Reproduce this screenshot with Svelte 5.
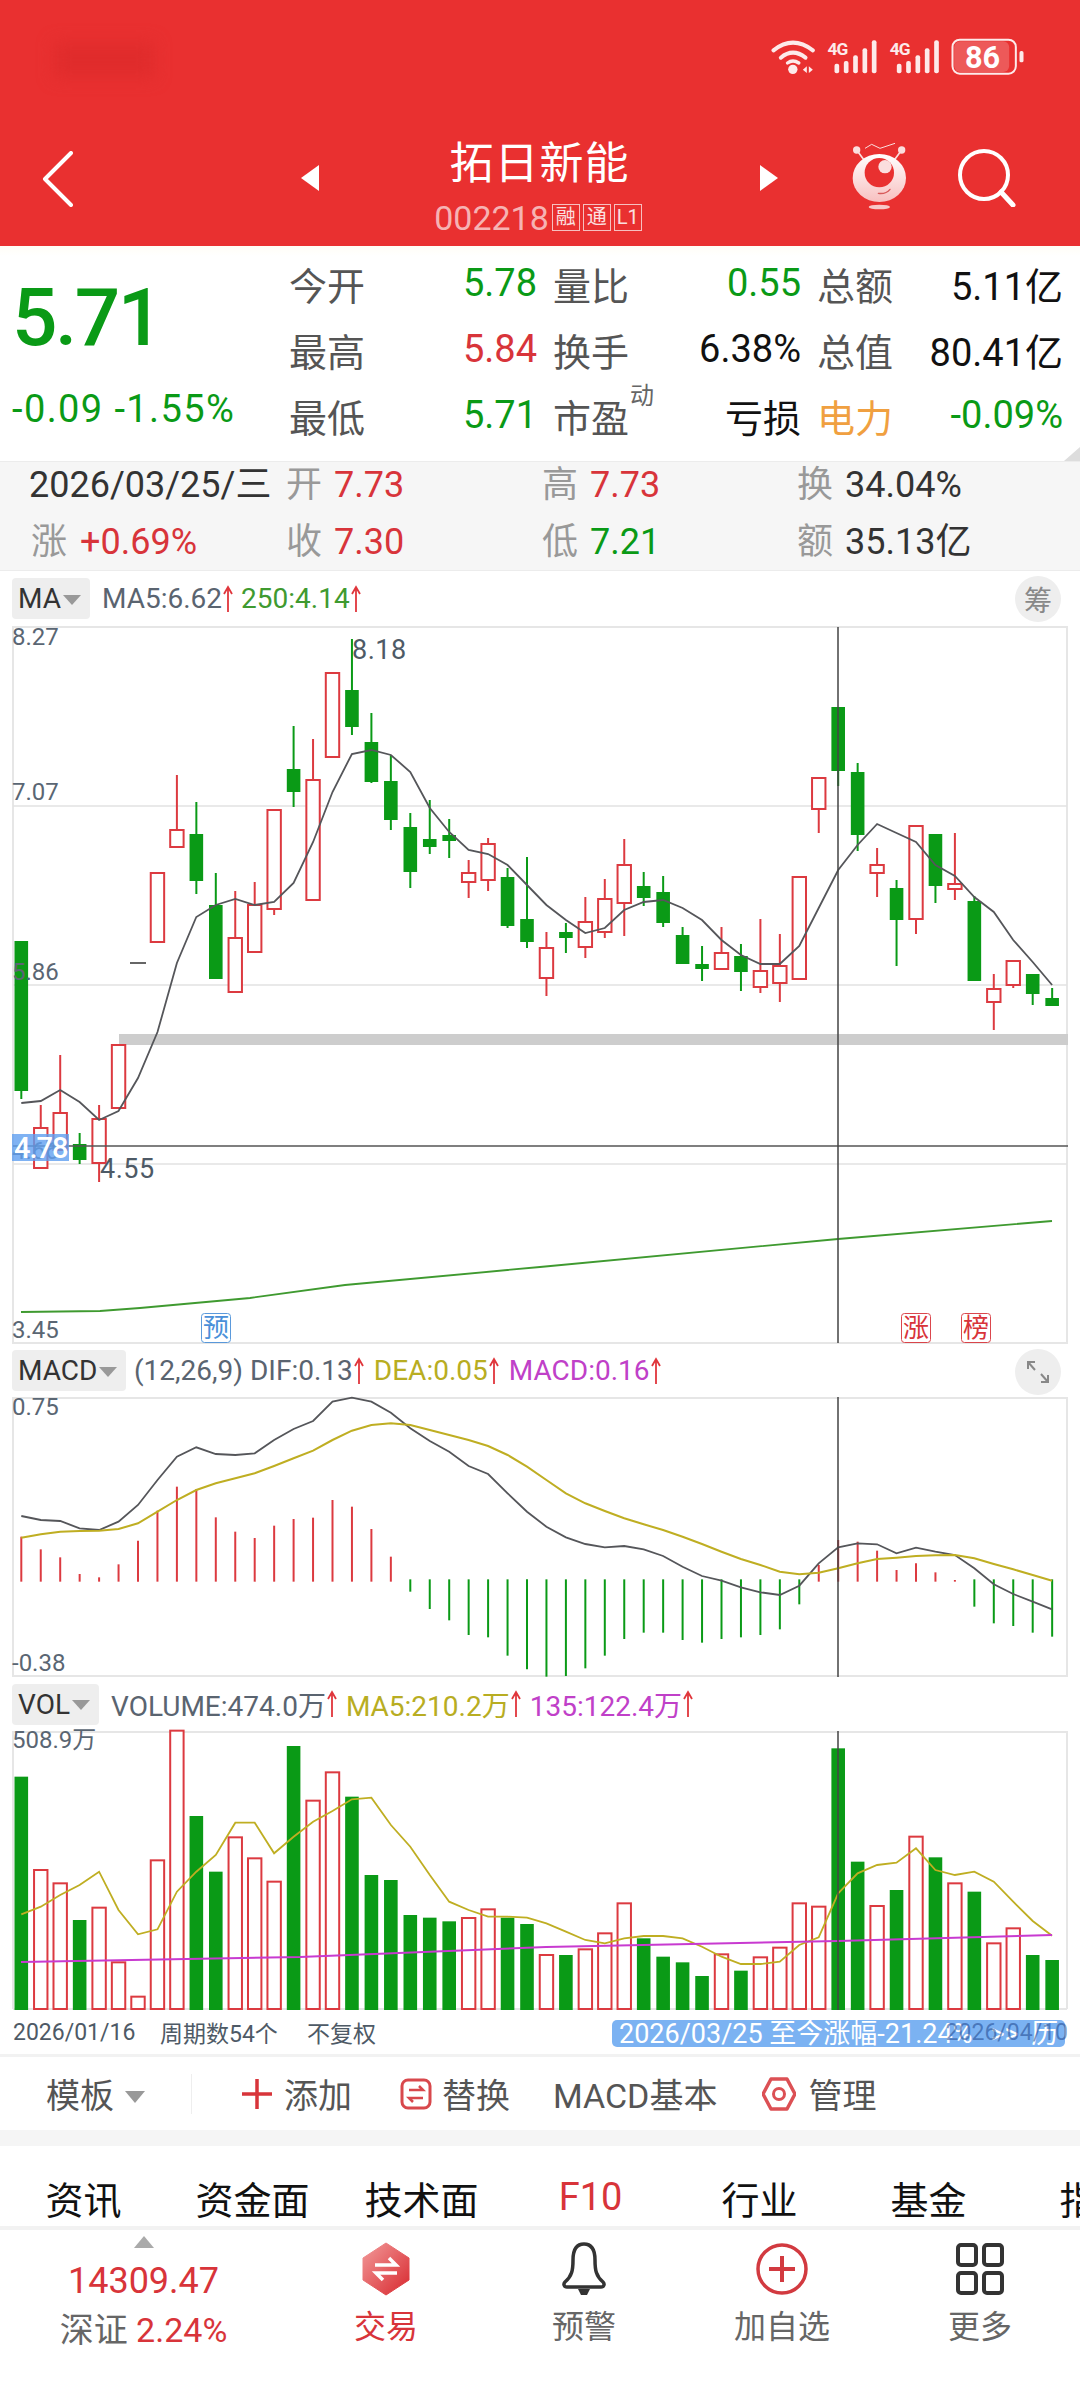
<script>
  const X = (i) => 21.3 + 19.45 * i
  const line = (ys, map = (y) => y) => ys.map((y, i) => `${X(i).toFixed(1)},${map(y).toFixed(1)}`).join(' ')

  // type, high, body top, body bottom, low (page y)
  const candles = [
    ['g', 941, 941, 1091, 1099], ['r', 1105, 1128, 1168, 1168], ['r', 1055, 1113, 1150, 1150], ['g', 1133, 1144, 1160, 1164],
    ['r', 1105, 1119, 1163, 1182], ['r', 1045, 1045, 1108, 1108], ['f', 963, 963, 963, 963], ['r', 873, 873, 942, 942],
    ['r', 775, 830, 847, 847], ['g', 802, 834, 881, 894], ['g', 873, 905, 979, 979], ['r', 891, 938, 992, 992],
    ['r', 882, 905, 952, 952], ['r', 810, 810, 909, 915], ['g', 726, 769, 792, 807], ['r', 739, 780, 900, 900],
    ['r', 673, 673, 757, 757], ['g', 639, 690, 727, 735], ['g', 713, 742, 782, 783], ['g', 755, 781, 820, 830],
    ['g', 813, 827, 872, 888], ['g', 800, 839, 847, 854], ['g', 819, 835, 841, 858], ['r', 860, 873, 882, 898],
    ['r', 838, 844, 880, 891], ['g', 868, 877, 926, 928], ['g', 857, 919, 942, 948], ['r', 932, 948, 978, 996],
    ['g', 923, 932, 938, 953], ['r', 897, 922, 947, 958], ['r', 879, 899, 932, 938], ['r', 839, 865, 903, 936],
    ['g', 872, 886, 898, 906], ['g', 876, 892, 923, 927], ['g', 927, 935, 964, 964], ['g', 946, 964, 969, 981],
    ['r', 927, 953, 969, 969], ['g', 944, 956, 972, 991], ['r', 919, 971, 987, 993], ['r', 934, 966, 983, 1002],
    ['r', 877, 877, 979, 979], ['r', 778, 778, 809, 833], ['g', 707, 707, 771, 786], ['g', 763, 772, 835, 851],
    ['r', 848, 865, 873, 897], ['g', 880, 888, 920, 966], ['r', 826, 826, 919, 934], ['g', 834, 834, 886, 903],
    ['r', 833, 884, 889, 900], ['g', 896, 901, 981, 981], ['r', 974, 989, 1002, 1030], ['r', 961, 961, 985, 988],
    ['g', 974, 974, 994, 1005], ['g', 988, 998, 1006, 1006]
  ]

  const ma5 = [
    1103, 1101, 1090, 1102, 1120, 1111, 1078, 1032, 963, 917, 905, 899, 905, 902, 883, 842, 792, 754,
    750, 755, 772, 808, 832, 850, 854, 865, 885, 905, 920, 933, 928, 910, 902, 900, 908, 920, 940, 955,
    964, 964, 946, 908, 870, 845, 824, 833, 842, 865, 876, 897, 912, 940, 962, 985
  ]
  const ma250 = '21,1312 100,1311 140,1308 250,1298 345,1285 540,1267 838,1239 1052,1221'

  const grids = [806, 985, 1164]
  const axis = [['8.27', 645], ['7.07', 800], ['5.86', 980], ['4.66', 1159], ['3.45', 1338]]
  const tags = [['预', 201, '#4a90d9'], ['涨', 901, '#d8343a'], ['榜', 961, '#d8343a']]

  // macd bars: far end of each bar in zoomed y, 1340 + z / 3
  const macdY = (z) => 1340 + z / 3
  const macdBars = [
    590, 628, 652, 702, 712, 673, 602, 512, 440, 447, 532, 575, 594, 557, 537, 533, 480, 500, 567, 650,
    755, 807, 841, 885, 892, 947, 988, 1010, 1008, 985, 947, 897, 878, 878, 900, 908, 897, 892, 885, 868, 793,
    675, 600, 605, 632, 690, 670, 697, 720, 800, 850, 858, 878, 890
  ]
  const macdUp = (i) => i < 20 || (i > 40 && i < 49)
  const dif = [
    528, 540, 543, 565, 570, 545, 495, 420, 350, 322, 342, 345, 340, 300, 267, 243, 185, 173, 185, 218, 265,
    303, 335, 378, 402, 460, 515, 560, 592, 612, 622, 618, 628, 648, 680, 708, 722, 742, 757, 765, 737, 670,
    622, 610, 613, 640, 623, 635, 645, 685, 733, 762, 785, 808
  ]
  const dea = [
    593, 583, 575, 573, 572, 567, 550, 515, 480, 450, 430, 415, 400, 378, 355, 332, 300, 272, 255, 250, 255,
    270, 285, 300, 318, 345, 380, 420, 460, 490, 513, 535, 553, 570, 590, 612, 635, 657, 675, 695, 703, 698,
    685, 670, 657, 653, 648, 646, 645, 655, 672, 688, 705, 722
  ]

  // volume: bar tops, 1680 + z / 3
  const volY = (z) => 1680 + z / 3
  const volTypes = 'grrgrrrrrggrrrgrrggggggrrggrgrrrggggrgrrrrggrgrgrgrrgg'
  const volBars = [
    290, 570, 610, 720, 683, 847, 950, 541, 152, 408, 575, 472, 535, 605, 198, 362, 277, 350, 585, 600, 705,
    713, 724, 714, 688, 713, 732, 825, 825, 808, 760, 670, 775, 830, 847, 888, 823, 872, 832, 803, 670, 680,
    205, 545, 678, 630, 470, 532, 610, 635, 790, 745, 825, 840
  ]
  const volMa5 = [
    703, 680, 645, 615, 575, 690, 763, 748, 635, 575, 525, 428, 428, 520, 470, 425, 393, 358, 353, 435, 500,
    585, 665, 690, 710, 710, 713, 730, 755, 780, 790, 775, 768, 768, 775, 800, 830, 852, 852, 845, 795, 772,
    640, 580, 555, 548, 505, 570, 585, 575, 605, 665, 723, 767
  ]
  const volMa135 = '21,1962 300,1957 546,1947 838,1941 1052,1935'

  const quote = [
    ['今开', '5.78', 'green', '量比', '0.55', 'green', '总额', '5.11亿', 'black'],
    ['最高', '5.84', 'red', '换手', '6.38%', 'black', '总值', '80.41亿', 'black']
  ]
  const tabs = ['资讯', '资金面', '技术面', 'F10', '行业', '基金', '指标']
</script>

{#snippet up()}
  <svg class="up" width="10" height="28" viewBox="0 0 10 28"><path d="M5 27V2M1 9l4-7 4 7" fill="none" stroke="#e0363c" stroke-width="1.8" /></svg>
{/snippet}

{#snippet caret()}
  <i class="caret"></i>
{/snippet}

<div class="page">
  <header class="top">
    <div class="status">
      <span class="time-blur"></span>
      <svg width="257" height="40" viewBox="60 50 770 120">
        <g fill="none" stroke="#fdeaea" stroke-width="12" stroke-linecap="round">
          <path d="M70 90Q128 44 188 90" />
          <path d="M92 112Q128 82 166 112" />
        </g>
        <path d="M112 128Q128 116 146 128" fill="none" stroke="#fdeaea" stroke-width="10" stroke-linecap="round" />
        <circle cx="128" cy="147" r="14" fill="#fdeaea" />
        <path d="M170 138v20l-12-10zM176 138v20l12-10z" fill="#fdeaea" />
        {#each [0, 187] as dx}
          <g fill="#fdeaea" transform="translate({dx} 0)">
            <text class="net" x="232" y="103">4G</text>
            <rect x="253" y="130" width="14" height="29" rx="6" />
            <rect x="281" y="122" width="14" height="37" rx="6" />
            <rect x="309" y="105" width="14" height="54" rx="6" />
            <rect x="337" y="84" width="14" height="75" rx="6" />
            <rect x="365" y="60" width="14" height="99" rx="6" />
          </g>
        {/each}
        <rect x="607" y="58" width="190" height="102" rx="22" fill="none" stroke="#fdeaea" stroke-width="6" />
        <rect x="612" y="63" width="165" height="92" rx="18" fill="#fff" opacity=".2" />
        <text class="batt" x="697" y="142" text-anchor="middle">86</text>
        <rect x="808" y="92" width="12" height="34" rx="5" fill="#fdeaea" />
      </svg>
    </div>
    <div class="titlebar">
      <svg class="back" width="31" height="56" viewBox="0 0 31 56"><path d="M29 2L3 28l26 26" fill="none" stroke="#fff" stroke-width="4" stroke-linecap="round" stroke-linejoin="round" /></svg>
      <i class="tri left"></i>
      <div class="name">
        <div class="title">拓日新能</div>
        <div class="code">002218<b>融</b><b>通</b><b>L1</b></div>
      </div>
      <i class="tri right"></i>
      <svg class="mascot" width="60" height="70" viewBox="300 370 180 210">
        <defs>
          <linearGradient id="masc" x1="0" y1="0" x2="0" y2="1"><stop offset="0" stop-color="#fff" /><stop offset="1" stop-color="#f8c0c0" /></linearGradient>
        </defs>
        <path d="M320 397l22 30M455 397l-22 30" stroke="#fbdede" stroke-width="5" />
        <circle cx="320" cy="397" r="11" fill="#fbdede" />
        <circle cx="455" cy="397" r="11" fill="#fbdede" />
        <path d="M345 392l20-12 25 12 45-15" fill="none" stroke="#fbdede" stroke-width="3" />
        <ellipse cx="388" cy="481" rx="80" ry="72" fill="url(#masc)" />
        <circle cx="388" cy="465" r="44" fill="#e93030" />
        <circle cx="405" cy="447" r="20" fill="#fbdede" />
        <path d="M385 527q23 3 35-12" fill="none" stroke="#d85a5a" stroke-width="4" stroke-linecap="round" />
        <ellipse cx="388" cy="568" rx="32" ry="7" fill="#f8c8c8" />
      </svg>
      <svg class="search" width="58" height="58" viewBox="0 0 58 58"><circle cx="26" cy="26" r="24" fill="none" stroke="#fff" stroke-width="4" /><path d="M43 43l12 13" stroke="#fff" stroke-width="5" stroke-linecap="round" /></svg>
    </div>
  </header>

  <section class="quote">
    <div class="price">
      <div class="last">5.71</div>
      <div class="change">-0.09 -1.55%</div>
    </div>
    <div class="qgrid">
      {#each quote as row}
        {#each [0, 3, 6] as c}
          <span class="lab">{row[c]}</span>
          <span class="val {row[c + 2]}" class:last-col={c === 6}>{row[c + 1]}</span>
        {/each}
      {/each}
      <span class="lab">最低</span>
      <span class="val green">5.71</span>
      <span class="lab pe">市盈<sup>动</sup></span>
      <span class="val black">亏损</span>
      <span class="lab orange">电力</span>
      <span class="val green last-col">-0.09%</span>
    </div>
    <i class="corner"></i>
  </section>

  <section class="day">
    <span class="date">2026/03/25/三</span>
    <span><em>开</em><b class="red">7.73</b></span>
    <span><em>高</em><b class="red">7.73</b></span>
    <span><em>换</em><b>34.04%</b></span>
    <span class="rise"><em>涨</em><b class="red">+0.69%</b></span>
    <span><em>收</em><b class="red">7.30</b></span>
    <span><em>低</em><b class="green">7.21</b></span>
    <span><em>额</em><b>35.13亿</b></span>
  </section>

  <div class="phead ma">
    <button class="pick">MA{@render caret()}</button>
    <span class="gray">MA5:6.62</span>{@render up()}
    <span class="lime">250:4.14</span>{@render up()}
    <span class="round">筹</span>
  </div>
  <svg class="chart" width="1080" height="718" viewBox="0 626 1080 718">
    <rect x="13" y="627" width="1054" height="716" fill="none" stroke="#e6e6e6" stroke-width="2" />
    {#each grids as y}
      <line x1="13" x2="1067" y1={y} y2={y} stroke="#e2e2e2" stroke-width="1.5" />
    {/each}
    <rect x="119" y="1034" width="949" height="11" fill="#cdcdcd" />
    {#each candles as [type, high, top, bottom, low], i}
      {#if type === 'f'}
        <line x1={X(i) - 8} x2={X(i) + 8} y1={top} y2={top} stroke="#666" stroke-width="2" />
      {:else}
        {@const color = type === 'g' ? '#0a9a16' : '#dc3a40'}
        <line x1={X(i)} x2={X(i)} y1={high} y2={top} stroke={color} stroke-width="2" />
        <line x1={X(i)} x2={X(i)} y1={bottom} y2={low} stroke={color} stroke-width="2" />
        {#if type === 'g'}
          <rect x={X(i) - 6.8} y={top} width="13.6" height={bottom - top} fill={color} />
        {:else}
          <rect x={X(i) - 6.7} y={top} width="13.4" height={bottom - top} fill="#fff" stroke={color} stroke-width="2" />
        {/if}
      {/if}
    {/each}
    <polyline points={line(ma5)} fill="none" stroke="#55565a" stroke-width="1.8" />
    <polyline points={ma250} fill="none" stroke="#3f9a30" stroke-width="1.8" />
    {#each axis as [label, y]}
      <text class="axis" x="12" {y}>{label}</text>
    {/each}
    <text class="peak" x="352" y="659">8.18</text>
    <text class="peak" x="100" y="1178">4.55</text>
    {#each tags as [label, x, color]}
      <rect x={x + 0.5} y="1313.5" width="29" height="29" rx="3" fill="#fff" stroke={color} opacity=".9" />
      <text class="tag" x={x + 15} y="1337" fill={color} text-anchor="middle">{label}</text>
    {/each}
    <line x1="13" x2="1068" y1="1146" y2="1146" stroke="#555" stroke-width="1.5" />
    <rect x="12" y="1134" width="57" height="27" fill="#5f9ff0" opacity=".8" />
    <text class="cur" x="14" y="1158">4.78</text>
    <line x1="838" x2="838" y1="627" y2="1343" stroke="#444" stroke-width="2" opacity=".75" />
  </svg>

  <div class="phead macd">
    <button class="pick">MACD{@render caret()}</button>
    <span class="gray">(12,26,9) DIF:0.13</span>{@render up()}
    <span class="olive">DEA:0.05</span>{@render up()}
    <span class="magenta">MACD:0.16</span>{@render up()}
    <span class="round">
      <svg width="26" height="26" viewBox="0 0 26 26"><path d="M3 10V3h7M3 3l7 8M23 16v7h-7M23 23l-7-8" fill="none" stroke="#888" stroke-width="2" /></svg>
    </span>
  </div>
  <svg class="chart" width="1080" height="280" viewBox="0 1397 1080 280">
    <rect x="13" y="1398" width="1054" height="278" fill="none" stroke="#e6e6e6" stroke-width="2" />
    {#each macdBars as z, i}
      {#if macdUp(i)}
        <line x1={X(i)} x2={X(i)} y1={macdY(z)} y2={macdY(725)} stroke="#dc3a40" stroke-width="2" />
      {:else}
        <line x1={X(i)} x2={X(i)} y1={macdY(718)} y2={macdY(z)} stroke="#0a9a16" stroke-width="2" />
      {/if}
    {/each}
    <polyline points={line(dif, macdY)} fill="none" stroke="#55565a" stroke-width="1.8" />
    <polyline points={line(dea, macdY)} fill="none" stroke="#bfae22" stroke-width="2" />
    <text class="axis" x="12" y="1415">0.75</text>
    <text class="axis" x="12" y="1671">-0.38</text>
    <line x1="838" x2="838" y1="1397" y2="1677" stroke="#444" stroke-width="2" opacity=".75" />
  </svg>

  <div class="phead vol">
    <button class="pick">VOL{@render caret()}</button>
    <span class="gray">VOLUME:474.0万</span>{@render up()}
    <span class="olive">MA5:210.2万</span>{@render up()}
    <span class="magenta">135:122.4万</span>{@render up()}
  </div>
  <svg class="chart" width="1080" height="279" viewBox="0 1731 1080 279">
    <path d="M13 2009V1732H1067V2009" fill="none" stroke="#e6e6e6" stroke-width="2" />
    <line x1="13" x2="1067" y1="2009" y2="2009" stroke="#e6e6e6" stroke-width="2" />
    {#each volBars as z, i}
      {@const y = volY(z)}
      {#if volTypes[i] === 'g'}
        <rect x={X(i) - 6.8} {y} width="13.6" height={2010 - y} fill="#0a9a16" />
      {:else}
        <rect x={X(i) - 6.7} {y} width="13.4" height={2009 - y} fill="#fff" stroke="#dc3a40" stroke-width="2" />
      {/if}
    {/each}
    <polyline points={line(volMa5, volY)} fill="none" stroke="#bfae22" stroke-width="1.8" />
    <polyline points={volMa135} fill="none" stroke="#c83ad0" stroke-width="2" />
    <text class="axis" x="12" y="1748">508.9万</text>
    <line x1="838" x2="838" y1="1731" y2="2010" stroke="#444" stroke-width="2" opacity=".75" />
  </svg>

  <div class="range">
    <span class="start">2026/01/16</span>
    <span class="cycles">周期数54个</span>
    <span class="adjust">不复权</span>
    <div class="since">2026/03/25 至今涨幅-21.24%<span class="more">&gt;&gt; 历</span></div>
    <span class="end">2026/04/10</span>
  </div>

  <div class="tools">
    <span class="tpl">模板<i class="caret big"></i></span>
    <i class="sep"></i>
    <span class="tool add">
      <svg width="30" height="30" viewBox="0 0 30 30"><path d="M15 0v30M0 15h30" stroke="#d8343a" stroke-width="3.5" /></svg>添加
    </span>
    <span class="tool swap">
      <svg width="32" height="32" viewBox="0 0 32 32"><rect x="2" y="2" width="28" height="28" rx="6" fill="none" stroke="#d8484c" stroke-width="3" /><path d="M9 12h14l-4-4M23 20H9l4 4" fill="none" stroke="#d8484c" stroke-width="2.5" /></svg>替换
    </span>
    <span class="tool basic">MACD基本</span>
    <span class="tool manage">
      <svg width="34" height="34" viewBox="0 0 34 34"><path d="M9 2h16l8 15-8 15H9L1 17z" fill="none" stroke="#dc5054" stroke-width="3.5" stroke-linejoin="round" /><circle cx="17" cy="17" r="5.5" fill="none" stroke="#dc5054" stroke-width="3" /></svg>管理
    </span>
  </div>
  <div class="band"></div>

  <nav class="tabs">
    {#each tabs as tab}
      <span class:active={tab === 'F10'}>{tab}</span>
    {/each}
  </nav>

  <nav class="bottom">
    <div class="index">
      <i class="up-tri"></i>
      <div class="points">14309.47</div>
      <div class="rate">深证 <b>2.24%</b></div>
    </div>
    <div class="item trade">
      <svg width="48" height="54" viewBox="0 0 48 54">
        <defs>
          <linearGradient id="hex" x1="0" y1="0" x2="1" y2="1"><stop offset="0" stop-color="#f29a9a" /><stop offset="1" stop-color="#d8282e" /></linearGradient>
        </defs>
        <path d="M24 1l23 15v22L24 53 1 38V16z" fill="url(#hex)" stroke="url(#hex)" stroke-linejoin="round" />
        <path d="M13 23h21l-7-7M35 31H14l7 7" fill="none" stroke="#fff" stroke-width="3.5" />
      </svg>
      <span>交易</span>
    </div>
    <div class="item">
      <svg width="46" height="54" viewBox="0 0 46 54"><path d="M23 2c-8 0-11 7-11 16 0 10-1 16-8 22-2 2-1 5 2 5h34c3 0 4-3 2-5-7-6-8-12-8-22 0-9-3-16-11-16z" fill="none" stroke="#333" stroke-width="3.5" /><path d="M17 47h12l-3 6h-6z" fill="#333" /></svg>
      <span>预警</span>
    </div>
    <div class="item">
      <svg width="52" height="54" viewBox="0 0 52 54"><circle cx="26" cy="27" r="24" fill="none" stroke="#d23a40" stroke-width="3.5" /><path d="M26 14v26M13 27h26" stroke="#d23a40" stroke-width="4" /></svg>
      <span>加自选</span>
    </div>
    <div class="item">
      <svg width="48" height="54" viewBox="0 0 48 54"><g fill="none" stroke="#333" stroke-width="4"><rect x="2" y="3" width="18" height="20" rx="3" /><rect x="28" y="3" width="18" height="20" rx="3" /><rect x="2" y="31" width="18" height="20" rx="3" /><rect x="28" y="31" width="18" height="20" rx="3" /></g></svg>
      <span>更多</span>
    </div>
  </nav>
</div>

<style>
  :global(body) {
    margin: 0;
    background: #fff;
  }

  .page {
    width: 1080px;
    height: 2400px;
    overflow: hidden;
    font-family: Roboto, "Noto Sans CJK SC", sans-serif;
    color: #333;
  }

  .red { color: #d8343a; }
  .green { color: #0a9a16; }
  .black { color: #111; }
  .orange { color: #f0a040 !important; }

  /* header */
  .top {
    height: 246px;
    background: #e93030;
    color: #fff;
  }

  .status {
    height: 95px;
    padding: 37px 53px 0 0;
    box-sizing: border-box;
    display: flex;
    justify-content: flex-end;
    position: relative;
  }

  .time-blur {
    position: absolute;
    left: 54px;
    top: 42px;
    width: 100px;
    height: 36px;
    background: #e02c2c;
    filter: blur(8px);
  }

  .net {
    font-size: 52px;
    font-weight: 700;
    letter-spacing: -3px;
  }

  .batt {
    font-size: 92px;
    font-weight: 700;
    fill: #fff;
  }

  .titlebar {
    height: 151px;
    display: flex;
    align-items: center;
  }

  .back {
    margin: 17px 0 0 42px;
  }

  .tri {
    width: 0;
    height: 0;
    border-style: solid;
    border-color: transparent;
    border-width: 13px 0;
    margin-top: 15px;
  }

  .tri.left {
    margin-left: 228px;
    border-right: 18px solid #fff;
  }

  .tri.right {
    border-left: 18px solid #fff;
  }

  .name {
    width: 441px;
    text-align: center;
    margin-top: 34px;
  }

  .title {
    font-size: 44px;
    line-height: 56px;
    letter-spacing: 1px;
  }

  .code {
    font-size: 34px;
    line-height: 44px;
    margin-top: 4px;
    margin-left: -3px;
    color: #f6b3b3;
    display: flex;
    justify-content: center;
    align-items: center;
  }

  .code b {
    font-weight: 400;
    font-size: 20px;
    line-height: 25px;
    width: 26px;
    margin-left: 3px;
    border: 1px solid #f6c0c0;
    color: #fbe0e0;
    text-align: center;
  }

  .mascot {
    margin: 10px 0 0 72px;
  }

  .search {
    margin: 15px 0 0 48px;
  }

  /* quote */
  .quote {
    height: 215px;
    position: relative;
    display: flex;
    background: linear-gradient(#fffdf6, #fff 10px);
  }

  .price {
    width: 289px;
    padding-left: 12px;
    box-sizing: border-box;
  }

  .last {
    margin-top: 30px;
    font-size: 80px;
    line-height: 84px;
    font-weight: 500;
    letter-spacing: -2.5px;
    color: #0a9a16;
  }

  .change {
    margin-top: 27px;
    font-size: 38px;
    line-height: 44px;
    color: #0a9a16;
    white-space: nowrap;
    letter-spacing: 1.4px;
  }

  .qgrid {
    display: grid;
    grid-template-columns: 76px 188px 76px 188px 76px 170px;
    grid-auto-rows: 66px;
    align-items: center;
    padding-top: 4px;
    font-size: 38px;
    white-space: nowrap;
  }

  .lab {
    color: #555;
  }

  .val {
    text-align: right;
    padding-right: 16px;
  }

  .val.last-col {
    padding-right: 0;
  }

  .pe {
    position: relative;
  }

  .pe sup {
    position: absolute;
    left: 77px;
    top: -7px;
    font-size: 24px;
    line-height: 30px;
    color: #666;
  }

  .corner {
    position: absolute;
    right: 0;
    bottom: 0;
    border-style: solid;
    border-width: 0 0 14px 16px;
    border-color: transparent transparent #ddd transparent;
  }

  /* day strip */
  .day {
    height: 108px;
    background: #f6f6f6;
    border-top: 1px solid #ececec;
    border-bottom: 1px solid #ececec;
    box-sizing: content-box;
    padding-left: 31px;
    display: grid;
    grid-template-columns: 255px 256px 255px 1fr;
    grid-auto-rows: 57px;
    font-size: 36px;
    line-height: 47px;
    white-space: nowrap;
    color: #333;
  }

  .date {
    margin-left: -2px;
  }

  .day em {
    font-style: normal;
    color: #999;
    margin-right: 12px;
  }

  .day b {
    font-weight: 400;
  }

  .rise em {
    margin-right: 13px;
  }

  /* panel headers */
  .phead {
    height: 57px;
    display: flex;
    align-items: center;
    font-size: 28px;
    white-space: nowrap;
    position: relative;
    padding-left: 12px;
  }

  .ma { height: 55px; }
  .macd { height: 53px; }
  .vol { height: 54px; }

  .pick {
    height: 41px;
    margin: 0 12px 0 0;
    padding: 0 0 0 6px;
    border: 0;
    border-radius: 4px;
    background: #eee;
    color: #333;
    font: inherit;
    display: flex;
    align-items: center;
    gap: 2px;
  }

  .ma .pick { width: 78px; }
  .macd .pick { width: 114px; margin-right: 8px; }
  .vol .pick { width: 87px; }

  .caret {
    width: 0;
    height: 0;
    border-style: solid;
    border-color: #999 transparent transparent;
    border-width: 10px 9px 0;
    margin-top: 2px;
  }

  .caret.big {
    display: inline-block;
    border-width: 12px 10px 0;
    margin: 0 0 4px 11px;
    vertical-align: middle;
  }

  .up {
    margin: 0 8px 0 1px;
  }

  .macd .up {
    margin-right: 10px;
  }

  .vol .up {
    margin-right: 9px;
  }

  .gray { color: #5a6470; }
  .lime { color: #3f9a30; }
  .olive { color: #b8ad22; }
  .magenta { color: #c040c8; }

  .round {
    position: absolute;
    left: 1015px;
    top: 5px;
    width: 46px;
    height: 46px;
    border-radius: 50%;
    background: #eee;
    color: #888;
    display: flex;
    align-items: center;
    justify-content: center;
    font-size: 28px;
  }

  .chart {
    display: block;
    overflow: visible;
  }

  .axis {
    font-size: 24px;
    fill: #5a6673;
  }

  .peak {
    font-size: 27px;
    letter-spacing: .5px;
    fill: #4e5a66;
  }

  .tag {
    font-size: 26px;
  }

  .cur {
    font-size: 29px;
    font-weight: 500;
    letter-spacing: -1px;
    fill: #fff;
  }

  /* range row under the volume chart */
  .range {
    height: 44px;
    position: relative;
    display: flex;
    align-items: center;
    padding-left: 13px;
    font-size: 23px;
    color: #4e5a66;
    white-space: nowrap;
  }

  .start { width: 147px; }
  .cycles { width: 147px; }
  .adjust { width: 100px; }

  .end {
    position: absolute;
    right: 12px;
    top: 9px;
    color: rgba(40, 80, 150, .6);
  }

  .since {
    position: absolute;
    left: 612px;
    top: 10px;
    width: 453px;
    height: 27px;
    box-sizing: border-box;
    padding-left: 7px;
    border-radius: 5px;
    background: rgba(100, 165, 240, .85);
    color: #fff;
    font-size: 27px;
    line-height: 28px;
    overflow: hidden;
  }

  .more {
    margin-left: 18px;
    word-spacing: 6px;
  }

  /* toolbar */
  .tools {
    height: 73px;
    border-top: 3px solid #f2f2f2;
    display: flex;
    align-items: center;
    font-size: 34px;
    color: #555;
    white-space: nowrap;
  }

  .tpl {
    margin-left: 46px;
    width: 145px;
  }

  .sep {
    width: 1px;
    height: 40px;
    background: #eee;
  }

  .tool {
    display: flex;
    align-items: center;
    gap: 12px;
  }

  .add { margin-left: 50px; }
  .swap { margin-left: 48px; gap: 10px; }
  .basic { margin-left: 43px; }
  .manage { margin-left: 45px; }

  .band {
    height: 16px;
    background: #f5f5f5;
  }

  /* tabs */
  .tabs {
    height: 80px;
    box-sizing: border-box;
    padding-top: 22px;
    margin-left: -1px;
    display: flex;
    align-items: center;
    overflow: hidden;
    font-size: 38px;
    color: #111;
    white-space: nowrap;
  }

  .tabs span {
    flex: 0 0 169px;
    text-align: center;
  }

  .tabs .active {
    color: #d8343a;
  }

  /* bottom nav */
  .bottom {
    border-top: 4px solid #f2f2f2;
    display: grid;
    grid-template-columns: 287px repeat(4, 198px);
  }

  .index {
    text-align: center;
    padding-top: 6px;
  }

  .up-tri {
    display: block;
    width: 0;
    height: 0;
    margin: 0 auto;
    border-style: solid;
    border-color: transparent transparent #aaa;
    border-width: 0 10px 12px;
  }

  .points {
    margin-top: 11px;
    font-size: 36px;
    line-height: 44px;
    color: #d8343a;
  }

  .rate {
    margin-top: 5px;
    font-size: 34px;
    line-height: 44px;
    color: #666;
  }

  .rate b {
    font-weight: 400;
    color: #d8343a;
  }

  .item {
    display: flex;
    flex-direction: column;
    align-items: center;
    padding-top: 12px;
    font-size: 32px;
    line-height: 44px;
    color: #666;
  }

  .item span {
    margin-top: 9px;
  }

  .trade {
    color: #d8343a;
  }
</style>
